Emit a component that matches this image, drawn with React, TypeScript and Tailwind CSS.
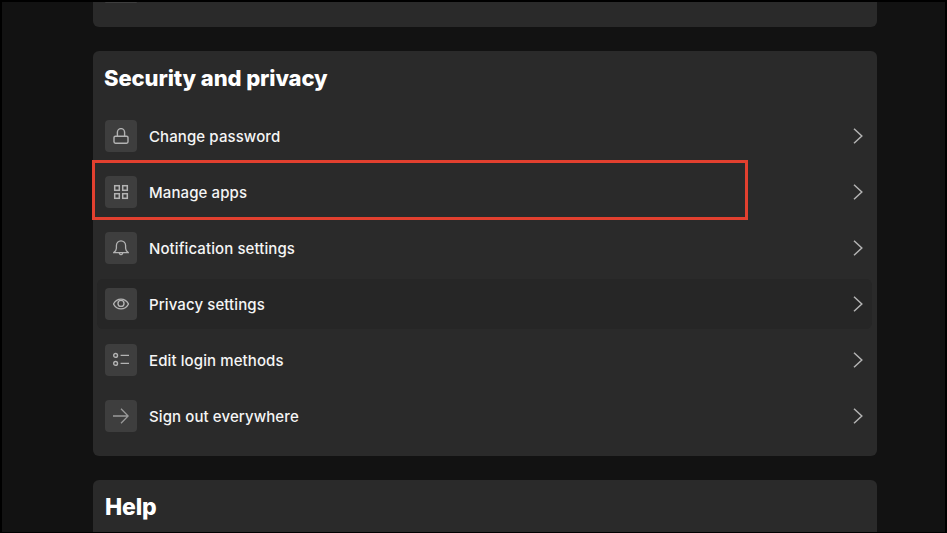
import React from "react";

const iconClass = "w-4 h-4 text-[#b3b3b3]";

const LockIcon = () => (
  <svg className={iconClass} viewBox="0 0 16 16" fill="none" stroke="currentColor" strokeWidth="1.4">
    <path d="M4.4 8.2V4.2a3.6 3.6 0 0 1 7.2 0v4" />
    <rect x="1" y="8.2" width="14" height="7" rx="1.4" />
  </svg>
);

const GridIcon = () => (
  <svg className={iconClass} viewBox="0 0 16 16" fill="none" stroke="currentColor" strokeWidth="1.5">
    <rect x="1.7" y="1.7" width="4.6" height="4.6" />
    <rect x="9.7" y="1.7" width="4.6" height="4.6" />
    <rect x="1.7" y="9.7" width="4.6" height="4.6" />
    <rect x="9.7" y="9.7" width="4.6" height="4.6" />
  </svg>
);

const BellIcon = () => (
  <svg className={iconClass} viewBox="0 0 16 16" fill="none" stroke="currentColor" strokeWidth="1.3">
    <path d="M8 .8a4.6 4.6 0 0 0-4.6 4.6v2.8c0 1.8-1 3-2.6 4.4h14.4c-1.6-1.4-2.6-2.6-2.6-4.4V5.4A4.6 4.6 0 0 0 8 .8z" />
    <path d="M6.2 12.8a1.8 1.8 0 0 0 3.6 0" />
  </svg>
);

const EyeIcon = () => (
  <svg className={iconClass} viewBox="0 0 16 16" fill="none" stroke="currentColor" strokeWidth="1.4">
    <path d="M.5 8C2.2 4.8 4.8 3.1 8 3.1s5.8 1.7 7.5 4.9c-1.7 3.2-4.3 4.9-7.5 4.9S2.2 11.2.5 8z" />
    <circle cx="8" cy="7.4" r="3" />
  </svg>
);

const ListIcon = () => (
  <svg className={iconClass} viewBox="0 0 16 16" fill="none" stroke="currentColor" strokeWidth="1.4">
    <circle cx="2.6" cy="3.4" r="1.9" />
    <circle cx="2.6" cy="11.4" r="1.9" />
    <path d="M7.6 3.4H16M7.6 11.4H16" />
  </svg>
);

const ArrowIcon = () => (
  <svg className="w-4 h-4 text-[#9a9a9a]" viewBox="0 0 16 16" fill="none" stroke="currentColor" strokeWidth="1.3">
    <path d="M0 8h15M8 .8 15.2 8 8 15.2" />
  </svg>
);

const Chevron = () => (
  <svg className="w-[10px] h-4 text-[#b3b3b3]" viewBox="0 0 10 16" fill="none" stroke="currentColor" strokeWidth="1.5">
    <path d="M1 .8 8.8 8 1 15.2" />
  </svg>
);

const rows = [
  { label: "Change password", icon: <LockIcon /> },
  { label: "Manage apps", icon: <GridIcon /> },
  { label: "Notification settings", icon: <BellIcon /> },
  { label: "Privacy settings", icon: <EyeIcon />, active: true },
  { label: "Edit login methods", icon: <ListIcon /> },
  { label: "Sign out everywhere", icon: <ArrowIcon /> },
];

const App = () => {
  return (
    <div
      className="h-[533px] w-[947px] overflow-hidden bg-[#121212] border-2 border-b border-black"
      style={{ fontFamily: "Inter, 'Noto Sans', sans-serif" }}
    >
      <div className="relative ml-[91px] flex w-[784px] flex-col gap-6">
        {/* previous card, mostly scrolled off */}
        <div className="h-[25px] rounded-b-md bg-[#2a2a2a] px-3">
          <div className="h-px w-8 rounded-b bg-[#3e3e3e]" />
        </div>

        {/* Security and privacy */}
        <div className="h-[405px] rounded-md bg-[#2a2a2a] pt-[11px]">
          <h2 className="h-[32px] pl-[11px] text-[22px] leading-[32px] font-extrabold tracking-[-0.1px] text-white">
            Security and privacy
          </h2>
          <div className="mt-[14px] flex flex-col">
            {rows.map((row) => (
              <div key={row.label} className="relative flex h-14 items-center pl-3 pr-[14px]">
                {row.active && <div className="absolute inset-x-1 top-[3px] bottom-[3px] mr-[1px] rounded-md bg-[#262626]" />}
                <div className="relative flex h-8 w-8 items-center justify-center rounded bg-[#3e3e3e]">
                  {row.icon}
                </div>
                <span className="relative ml-3 flex-1 pt-[2px] text-[15px] leading-[22px] font-medium tracking-[0.1px] text-[#f5f5f5]">
                  {row.label}
                </span>
                <div className="relative">
                  <Chevron />
                </div>
              </div>
            ))}
          </div>
        </div>

        {/* Help */}
        <div className="h-[60px] rounded-t-md bg-[#2a2a2a] pt-[11px]">
          <h2 className="pl-3 text-[23px] leading-[32px] font-extrabold tracking-[-0.2px] text-white">Help</h2>
        </div>

        {/* annotation box */}
        <div className="absolute left-[-1px] top-[158px] h-[60px] w-[656px] border-[3px] border-[#e2402f]" />
      </div>
    </div>
  );
};

export default App;
